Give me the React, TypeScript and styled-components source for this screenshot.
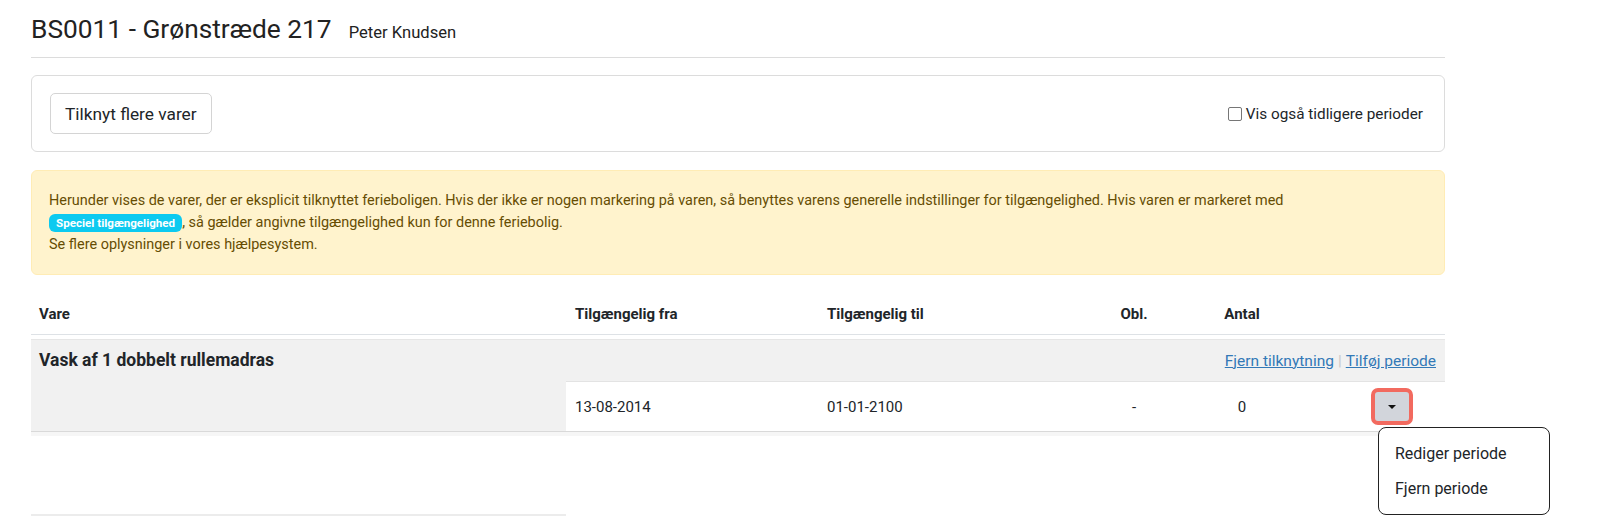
import React from 'react';
import styled, {createGlobalStyle} from 'styled-components';

const GlobalStyle = createGlobalStyle`
  body {
    margin: 0;
    background: #fff;
    font-family: Roboto, "Liberation Sans", sans-serif;
    color: #212529;
  }
`;

const columns = '535px 252px 266px 100px 116px 145px';

const Page = styled.div`
  width: 1414px;
  padding: 14px 0 0 31px;
`;

const Header = styled.div`
  display: flex;
  align-items: baseline;
  gap: 17px;
  padding-bottom: 12px;
  border-bottom: 1px solid #dcdcdc;
`;

const Title = styled.h1`
  margin: 0;
  font-size: 26.3px;
  font-weight: 400;
  line-height: 31px;
  color: #222;
`;

const Owner = styled.span`
  font-size: 16.6px;
  color: #222;
`;

const Toolbar = styled.div`
  margin-top: 17px;
  border: 1px solid #dcdcdc;
  border-radius: 6px;
  padding: 17px 21px 17px 18px;
  display: flex;
  align-items: center;
  justify-content: space-between;
`;

const Button = styled.button`
  height: 41px;
  padding: 0 14px;
  font-family: inherit;
  font-size: 17.3px;
  color: #212529;
  background: #fff;
  border: 1px solid #d4d4d4;
  border-radius: 5px;
`;

const CheckLabel = styled.label`
  display: flex;
  align-items: center;
  gap: 4px;
  font-size: 15.3px;
  color: #212529;
`;

const Check = styled.input`
  appearance: none;
  margin: 0;
  width: 14px;
  height: 14px;
  border: 1px solid #767676;
  border-radius: 2px;
  background: #fff;
`;

const Alert = styled.div`
  margin-top: 18px;
  background: #fff3cd;
  border: 1px solid #ffecb5;
  border-radius: 6px;
  padding: 19px 17px 18px;
  font-size: 14.45px;
  line-height: 22px;
  color: #664d03;
`;

const Badge = styled.span`
  display: inline-block;
  background: #0dcaf0;
  color: #fff;
  font-size: 11.6px;
  font-weight: 700;
  line-height: 18px;
  padding: 0 7px;
  border-radius: 6px;
`;

const HeadRow = styled.div`
  display: grid;
  grid-template-columns: ${columns};
  margin-top: 20px;
  border-bottom: 1px solid #dee2e6;
`;

const HeadCell = styled.div<{$center?: boolean}>`
  padding: 9px 9px;
  font-size: 15px;
  font-weight: 700;
  line-height: 21px;
  text-align: ${p => (p.$center ? 'center' : 'left')};
  &:first-child {
    padding-left: 8px;
  }
`;

const ItemGroup = styled.div`
  margin-top: 4px;
  display: grid;
  grid-template-columns: ${columns};
  grid-template-rows: 41px 50px;
  background: #f1f1f1;
  border-top: 1px solid #e6e6e6;
  border-bottom: 1px solid #d9d9d9;
`;

const NameCell = styled.div`
  grid-row: 1 / 3;
  padding: 9px 8px;
  font-size: 17.5px;
  font-weight: 700;
  line-height: 22px;
`;

const LinksCell = styled.div`
  grid-column: 2 / 7;
  display: flex;
  align-items: center;
  justify-content: flex-end;
  gap: 4px;
  padding-right: 9px;
  font-size: 15.5px;
`;

const Link = styled.a`
  color: #3379b7;
  text-decoration: underline;
  cursor: pointer;
`;

const Sep = styled.span`
  color: #c8c8c8;
`;

const PeriodCell = styled.div<{$center?: boolean; $end?: boolean}>`
  background: #fff;
  border-top: 1px solid #e3e3e3;
  display: flex;
  align-items: center;
  justify-content: ${p => (p.$end ? 'flex-end' : p.$center ? 'center' : 'flex-start')};
  padding: 0 ${p => (p.$end ? '32px' : '9px')} 0 9px;
  font-size: 15px;
`;

const Shade = styled.div`
  height: 4px;
  background: #f6f6f6;
`;

const NextRow = styled.div`
  margin-top: 78px;
  width: 535px;
  height: 2px;
  background: #ececec;
`;

const DropWrap = styled.div`
  position: relative;
`;

const Toggle = styled.button`
  width: 42px;
  height: 37px;
  border: 4px solid #f26a5f;
  border-radius: 7px;
  background: #d2d5db;
  display: flex;
  align-items: center;
  justify-content: center;
  padding: 0;
`;

const Caret = styled.span`
  width: 0;
  height: 0;
  border-left: 4px solid transparent;
  border-right: 4px solid transparent;
  border-top: 4px solid #111;
`;

const Menu = styled.div`
  position: absolute;
  top: calc(100% + 2px);
  left: 7px;
  width: 170px;
  padding: 8px 0;
  background: #fff;
  border: 1px solid #222;
  border-radius: 8px;
  z-index: 2;
`;

const MenuItem = styled.div`
  padding: 0 16px;
  line-height: 35px;
  font-size: 16px;
  color: #212529;
`;

const App = () => (
  <>
    <GlobalStyle />
    <Page>
      <Header>
        <Title>BS0011 - Grønstræde 217</Title>
        <Owner>Peter Knudsen</Owner>
      </Header>

      <Toolbar>
        <Button>Tilknyt flere varer</Button>
        <CheckLabel>
          <Check type="checkbox" />
          Vis også tidligere perioder
        </CheckLabel>
      </Toolbar>

      <Alert>
        Herunder vises de varer, der er eksplicit tilknyttet ferieboligen. Hvis der ikke er nogen
        markering på varen, så benyttes varens generelle indstillinger for tilgængelighed. Hvis
        varen er markeret med
        <br />
        <Badge>Speciel tilgængelighed</Badge>, så gælder angivne tilgængelighed kun for denne
        feriebolig.
        <br />
        Se flere oplysninger i vores hjælpesystem.
      </Alert>

      <HeadRow>
        <HeadCell>Vare</HeadCell>
        <HeadCell>Tilgængelig fra</HeadCell>
        <HeadCell>Tilgængelig til</HeadCell>
        <HeadCell $center>Obl.</HeadCell>
        <HeadCell $center>Antal</HeadCell>
        <HeadCell />
      </HeadRow>

      <ItemGroup>
        <NameCell>Vask af 1 dobbelt rullemadras</NameCell>
        <LinksCell>
          <Link>Fjern tilknytning</Link>
          <Sep>|</Sep>
          <Link>Tilføj periode</Link>
        </LinksCell>
        <PeriodCell>13-08-2014</PeriodCell>
        <PeriodCell>01-01-2100</PeriodCell>
        <PeriodCell $center>-</PeriodCell>
        <PeriodCell $center>0</PeriodCell>
        <PeriodCell $end>
          <DropWrap>
            <Toggle>
              <Caret />
            </Toggle>
            <Menu>
              <MenuItem>Rediger periode</MenuItem>
              <MenuItem>Fjern periode</MenuItem>
            </Menu>
          </DropWrap>
        </PeriodCell>
      </ItemGroup>
      <Shade />
      <NextRow />
    </Page>
  </>
);

export default App;
